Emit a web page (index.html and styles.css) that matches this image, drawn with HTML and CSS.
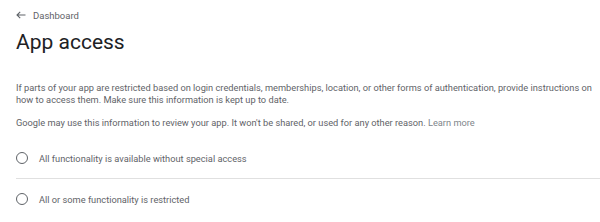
FILE: index.html
```html
<!DOCTYPE html>
<html>
<head>
<meta charset="utf-8">
<link rel="stylesheet" href="styles.css">
</head>
<body>
<div class="page">
  <div class="crumb">
    <svg class="back" width="10" height="8" viewBox="0 0 10 8"><path d="M9.5 4H1M4.2 0.8L1 4l3.2 3.2" fill="none" stroke="#5f6368" stroke-width="1.1"/></svg>
    <span>Dashboard</span>
  </div>
  <h1 class="title">App access</h1>
  <p class="text first">If parts of your app are restricted based on login credentials, memberships, location, or other forms of authentication, provide instructions on how to access them. Make sure this information is kept up to date.</p>
  <p class="text">Google may use this information to review your app. It won't be shared, or used for any other reason. <span class="link">Learn more</span></p>
  <div class="options">
    <label class="option"><span class="radio"></span><span>All functionality is available without special access</span></label>
    <label class="option"><span class="radio"></span><span>All or some functionality is restricted</span></label>
  </div>
</div>
</body>
</html>
```
FILE: styles.css
```css
html, body { margin: 0; padding: 0; background: #fff; }
body { font-family: Roboto, "Liberation Sans", sans-serif; color: #5f6368; }
.page { padding: 0 0 0 16px; }
.crumb { display: flex; align-items: center; gap: 7px; height: 14px; margin-top: 8px; font-size: 9.5px; color: #5f6368; }
.back { display: block; }
.title { margin: 6px 0 0; font-size: 21px; font-weight: 400; color: #202124; line-height: 28px; }
.text { margin: 0; padding-right: 8px; font-size: 9.25px; line-height: 12px; color: #5f6368; }
.text.first { margin-top: 26px; margin-bottom: 11px; }
.link { color: #80868b; }
.options { margin-top: 9px; }
.option { display: flex; align-items: center; gap: 11px; height: 40px; font-size: 9.25px; color: #5f6368; }
.option + .option { border-top: 1px solid #e0e0e0; }
.radio { box-sizing: border-box; width: 12px; height: 12px; border: 1.5px solid #5f6368; border-radius: 50%; }
```
